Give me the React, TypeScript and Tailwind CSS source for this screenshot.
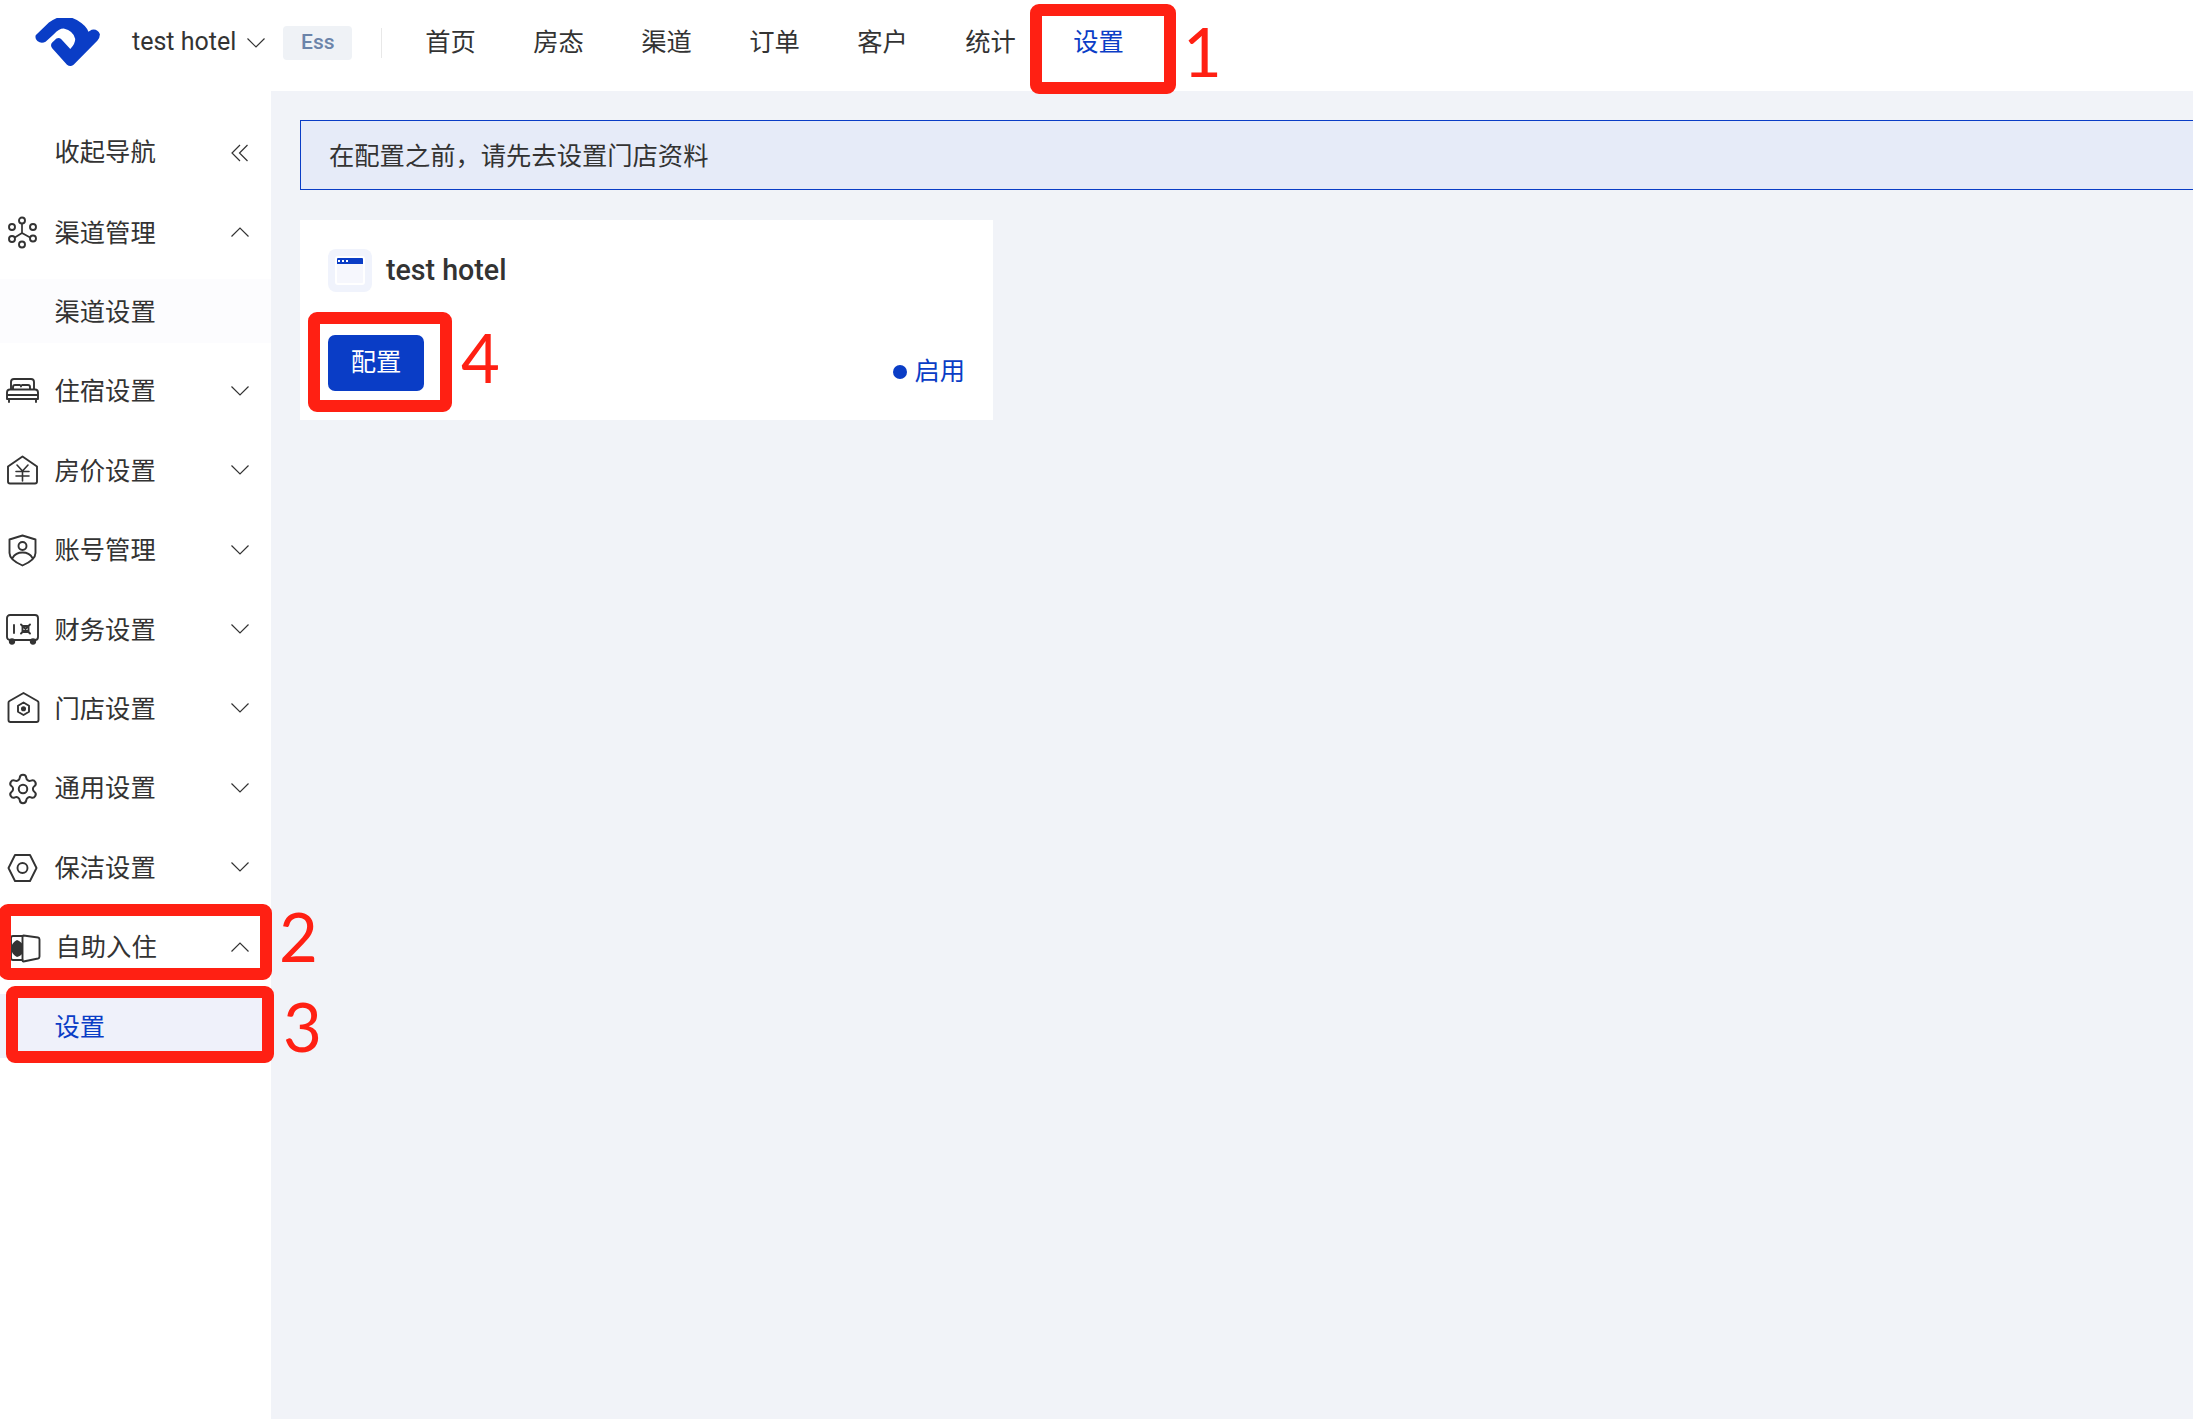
import { Settings } from 'lucide-react';
import type { ReactNode } from 'react';

const font = 'font-[Roboto,"Noto_Sans_CJK_SC",sans-serif]';

function Icon({ children, className = 'w-9' }: { children: ReactNode; className?: string }) {
  return (
    <svg
      viewBox="0 0 36 36"
      className={`h-9 shrink-0 ${className}`}
      fill="none"
      stroke="#333"
      strokeWidth="1.9"
      strokeLinecap="round"
      strokeLinejoin="round"
    >
      {children}
    </svg>
  );
}

function Chevron({ up = false }: { up?: boolean }) {
  return (
    <svg viewBox="0 0 18 10" className="block h-[10px] w-[18px] shrink-0" fill="none" stroke="#333" strokeWidth="1.2">
      <path d={up ? 'M0.5 9.5L9 1l8.5 8.5' : 'M0.5 0.5L9 9l8.5-8.5'} />
    </svg>
  );
}

const networkIcon = (
  <Icon>
    <path d="M18 8v10M18 18l-8 5M18 18l9 5" strokeWidth="1.7" />
    <g fill="#fff">
      <circle cx="18" cy="5.500" r="3" />
      <circle cx="8" cy="12" r="3" />
      <circle cx="29" cy="12" r="3" />
      <circle cx="8" cy="24" r="3" />
      <circle cx="29" cy="23.500" r="3" />
      <circle cx="18" cy="29.500" r="3" />
    </g>
  </Icon>
);

const bedIcon = (
  <Icon>
    <path d="M7 15V8a3 3 0 0 1 3-3h17a3 3 0 0 1 3 3v7" />
    <path d="M9 15v-2a2 2 0 0 1 2-2h5a2 2 0 0 1 1 1.500a2 2 0 0 1 1-1.500h6a2 2 0 0 1 2 2v2" />
    <path d="M6 15.500h25a3 3 0 0 1 3 3V25H3v-6.500a3 3 0 0 1 3-3zM3.500 21h30M5 25v3M32 25v3" />
  </Icon>
);

const priceIcon = (
  <Icon>
    <path d="M18.500 3.500L33 13.500V28.500a2 2 0 0 1-2 2H6a2 2 0 0 1-2-2V13.500z" />
    <path d="M13 12l5.500 6 5.500-6M12 18.500h13M12 23h13M18.500 18.500V28" strokeWidth="1.600" />
  </Icon>
);

const accountIcon = (
  <Icon>
    <path d="M18.500 2.500L31.500 6.500V20c0 5-6 9.500-13 12.500C11.500 29.500 5.500 25 5.500 20V6.500z" />
    <circle cx="18.500" cy="13" r="4" />
    <path d="M8.500 25c2-3.500 5.500-5.500 10-5.500s8 2 10 5.500" />
  </Icon>
);

const financeIcon = (
  <Icon>
    <rect x="3" y="3" width="31" height="25" rx="3" />
    <path d="M10 13v8M17 12.500l9 9M26 12.500l-9 9" />
    <rect x="18.500" y="14" width="6" height="6" rx="1" />
    <circle cx="8" cy="29.500" r="2.200" fill="#333" />
    <circle cx="29" cy="29.500" r="2.200" fill="#333" />
  </Icon>
);

const storeIcon = (
  <Icon>
    <path d="M19.500 2L33.500 10a2 2 0 0 1 1 1.800V29a2 2 0 0 1-2 2H6.500a2 2 0 0 1-2-2V11.800a2 2 0 0 1 1-1.800z" />
    <path d="M19.500 11.500l5.500 3.200v6.100l-5.500 3.200-5.500-3.200v-6.100z" />
    <circle cx="19.500" cy="17.700" r="1.600" fill="#333" />
  </Icon>
);

const cleanIcon = (
  <Icon>
    <path d="M4.500 18l6.500-13h15l6.500 13-6.500 13H11z" />
    <circle cx="18.500" cy="18" r="5" />
  </Icon>
);

const selfCheckInIcon = (
  <Icon className="w-[37px]">
    <path d="M18 6H8.500a2 2 0 0 0-2 2v20a2 2 0 0 0 2 2H18" />
    <path d="M19 5.500l14.500 2a2 2 0 0 1 1.500 2v17a2 2 0 0 1-1.500 2L19 31.500a1 1 0 0 1-1-1V6.500a1 1 0 0 1 1-1z" />
    <path d="M12.500 10c3 1.500 5 2.500 6 5v7c-1 3-3 4-6 5C9 25 7 23 7 18.500S9 12 12.500 10z" fill="#333" stroke="none" />
  </Icon>
);

const menu = [
  { label: '渠道管理', icon: networkIcon, open: true, sub: '渠道设置' },
  { label: '住宿设置', icon: bedIcon },
  { label: '房价设置', icon: priceIcon },
  { label: '账号管理', icon: accountIcon },
  { label: '财务设置', icon: financeIcon },
  { label: '门店设置', icon: storeIcon },
  { label: '通用设置', icon: <Settings className="ml-[2px] h-[34px] w-[34px] shrink-0" stroke="#333" strokeWidth={1.4} /> },
  { label: '保洁设置', icon: cleanIcon },
  { label: '自助入住', icon: selfCheckInIcon, open: true, sub: '设置', active: true },
];

const navItems = ['首页', '房态', '渠道', '订单', '客户', '统计', '设置'];

function Mark({ className, digit, digitClass }: { className: string; digit: string; digitClass: string }) {
  return (
    <>
      <div className={`absolute rounded-[9px] border-[12px] border-[#ff2013] ${className}`} />
      <div className={`absolute font-[Lato,sans-serif] text-[67px] leading-none text-[#ff2013] ${digitClass}`}>{digit}</div>
    </>
  );
}

export default function App() {
  return (
    <div className={`relative h-[1419px] w-[2193px] overflow-hidden bg-white text-[25.3px] text-[#333] ${font}`}>
      <header className="flex h-[91px] items-center pb-[5px] pl-[34px]">
        <svg viewBox="0 0 200 170" className="mt-[5px] h-[56px] w-[66px] shrink-0" fill="#0a3dc6">
          <path d="M5 52L45 14Q85-18 130 6Q160 24 165 42L175 36Q192 32 200 49Q200 59 192 69L120 142Q110 150 100 142L55 92Q48 82 55 74L68 62Q76 58 82 64L110 94Q125 79 125 64Q120 39 90 32Q75 32 60 49L35 72Q22 79 10 70Q2 62 5 52Z" />
        </svg>
        <span className="mb-[3px] ml-[32px] text-[25px] leading-none">test hotel</span>
        <svg viewBox="0 0 18 10" className="ml-[11px] h-[10px] w-[18px]" fill="none" stroke="#333" strokeWidth="1.2">
          <path d="M0.5 0.5L9 9l8.500-8.500" />
        </svg>
        <span className="ml-[18px] flex h-[34px] w-[69px] items-center justify-center rounded-[4px] bg-[#eff2f6] text-[21px] font-medium text-[#6b84a9]">
          Ess
        </span>
        <div className="ml-[29px] h-[30px] w-px bg-[#e8e8e8]" />
        <nav className="ml-[43px] flex gap-[57.4px]">
          {navItems.map((item) => (
            <span key={item} className={item === '设置' ? 'text-[#0a3dc6]' : ''}>
              {item}
            </span>
          ))}
        </nav>
      </header>

      <div className="flex h-[1328px]">
        <aside className="w-[271px] shrink-0 pt-[22px]">
          <div className="flex h-[79.4px] items-center pr-[22px] pl-[54.5px]">
            <span className="pt-[1px]">收起导航</span>
            <svg viewBox="0 0 18 18" className="ml-auto h-[18px] w-[18px]" fill="none" stroke="#333" strokeWidth="1.2">
              <path d="M9 1L1 9l8 8M16.500 1l-8 8 8 8" />
            </svg>
          </div>
          {menu.map((item) => (
            <div key={item.label}>
              <div className="flex h-[79.4px] items-center pr-[22px] pl-[4px]">
                <span className="pt-[2px]">{item.icon}</span>
                <span className="ml-[14.5px] pt-[3px]">{item.label}</span>
                <span className="ml-auto">
                  <Chevron up={item.open} />
                </span>
              </div>
              {item.sub && (
                <div className="flex h-[79.4px] items-center">
                  <div
                    className={`flex h-[64px] w-full items-center pt-[3px] pl-[54.5px] ${
                      item.active ? 'bg-[#eff1fa] text-[#0a3dc6]' : 'bg-[#fcfcfe]'
                    }`}
                  >
                    {item.sub}
                  </div>
                </div>
              )}
            </div>
          ))}
        </aside>

        <main className="min-w-0 flex-1 bg-[#f1f3f8] pt-[29px] pl-[29px]">
          <div className="flex h-[70px] w-[2000px] items-center border border-[#0a3dc6] bg-[#e6ebf8] pt-[3px] pl-[28px]">
            在配置之前，请先去设置门店资料
          </div>
          <div className="mt-[30px] h-[200px] w-[693px] bg-white px-[28px] pt-[29px]">
            <div className="flex items-center">
              <div className="flex h-[43px] w-[44px] items-center justify-center rounded-[8px] bg-[#f0f3fc]">
                <div className="h-[29px] w-[30px] overflow-hidden rounded-[3px] border-2 border-white bg-[#f6f7fd]">
                  <div className="flex h-[6px] items-center gap-[2px] bg-[#0a3dc6] pl-[1px]">
                    <span className="h-[2px] w-[2px] bg-white" />
                    <span className="h-[2px] w-[2px] bg-white" />
                    <span className="h-[2px] w-[2px] bg-white" />
                  </div>
                </div>
              </div>
              <span className="ml-[14px] text-[28.6px] font-medium leading-none">test hotel</span>
            </div>
            <div className="mt-[43px] flex items-start justify-between">
              <button className="flex h-[56px] w-[96px] items-center justify-center rounded-[7px] bg-[#0a3dc6] text-white">
                配置
              </button>
              <div className="mt-[18px] flex items-center text-[#0a3dc6]">
                <span className="h-[14px] w-[14px] rounded-full bg-[#0a3dc6]" />
                <span className="ml-[7px]">启用</span>
              </div>
            </div>
          </div>
        </main>
      </div>

      <Mark className="top-[4px] left-[1030px] h-[90px] w-[146px]" digit="1" digitClass="top-[18px] left-[1183px]" />
      <Mark className="top-[904px] left-[-1px] h-[76px] w-[273px]" digit="2" digitClass="top-[903px] left-[279px]" />
      <Mark className="top-[986px] left-[6px] h-[77px] w-[268px]" digit="3" digitClass="top-[993px] left-[283px]" />
      <Mark className="top-[312px] left-[308px] h-[100px] w-[144px]" digit="4" digitClass="top-[324px] left-[461px]" />
    </div>
  );
}
